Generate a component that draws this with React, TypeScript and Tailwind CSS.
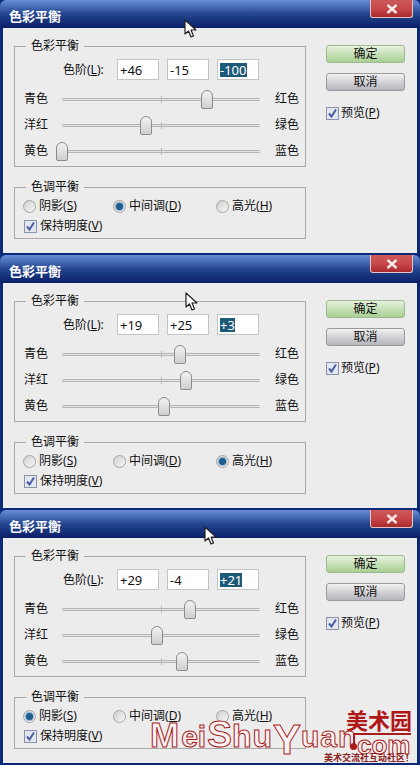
import React from "react";

const font = { fontFamily: '"Noto Sans", "Noto Sans CJK SC", sans-serif' };
const markFont = { fontFamily: '"Liberation Sans", sans-serif' };

type Tone = "shadow" | "mid" | "high";

interface DialogProps {
  values: [number, number, number];
  tone: Tone;
  cursorX: number;
  cursorY: number;
}

const fmt = (v: number) => (v > 0 ? `+${v}` : `${v}`);

const Cursor = ({ x, y }: { x: number; y: number }) => (
  <svg className="absolute z-10" style={{ left: x, top: y }} width="14" height="20" viewBox="0 0 14 20">
    <path d="M1 1 L1 15 L4.5 12 L7 18 L9.5 17 L7 11 L12 11 Z" fill="#fff" stroke="#222" strokeWidth="1.2" strokeLinejoin="round" />
  </svg>
);

const Check = () => (
  <span className="flex h-[13px] w-[13px] shrink-0 items-center justify-center border border-[#8a93ad] bg-[#e4e6ee]">
    <svg width="11" height="11" viewBox="0 0 11 11">
      <path d="M2 5.5 L4.5 8.5 L9 1.5" fill="none" stroke="#4a5fa8" strokeWidth="2" />
    </svg>
  </span>
);

const Radio = ({ on, label, hot, width }: { on: boolean; label: string; hot: string; width: string }) => (
  <div className={`flex items-center gap-[3px] ${width}`}>
    <span className="flex h-[13px] w-[13px] shrink-0 items-center justify-center rounded-full border border-[#a4a4a4] bg-gradient-to-br from-[#cfcfcf] to-[#f8f8f8]">
      {on && <span className="h-[7px] w-[7px] rounded-full bg-[#1f5f8f] ring-1 ring-[#8fb4d0]" />}
    </span>
    <span>
      {label}(<u>{hot}</u>)
    </span>
  </div>
);

const Slider = ({ left, right, value }: { left: string; right: string; value: number }) => (
  <div className="flex h-[26px] items-center">
    <span className="w-[47px] pl-[9px]">{left}</span>
    <div className="relative h-[3px] w-[198px] rounded-sm border-y border-[#b4b4b4] bg-[#e4e4e4]">
      <span className="absolute left-1/2 top-[-3px] h-[7px] w-px bg-[#b8b8b8]" />
      <span
        className="absolute top-[-9px] h-[19px] w-[12px] -translate-x-1/2 rounded-t-[6px] rounded-b-[2px] border border-[#8c8c8c] bg-gradient-to-b from-[#f2f2f2] to-[#cfcfcf]"
        style={{ left: `${(value + 100) / 2}%` }}
      />
    </div>
    <span className="pl-[15px]">{right}</span>
  </div>
);

const Dialog = ({ values, tone, cursorX, cursorY }: DialogProps) => (
  <div className="relative flex h-[255px] w-[420px] flex-col overflow-hidden rounded-t-[6px] bg-[#0c2a78]">
    <div className="flex h-[28px] shrink-0 items-start justify-between bg-gradient-to-b from-[#6a8fd8] via-[#24458f] to-[#0a1f68] pl-[9px] pr-[7px]">
      <span className="mt-[9px] text-[13px] font-bold leading-[15px] text-white">色彩平衡</span>
      <div className="flex h-[18px] w-[43px] items-center justify-center rounded-b-[3px] border border-t-0 border-[#e8c4c4] bg-gradient-to-b from-[#cc5a5a] via-[#c8474a] to-[#a8282c]">
        <svg width="12" height="10" viewBox="0 0 12 10">
          <path d="M1.5 1 L10.5 9 M10.5 1 L1.5 9" fill="none" stroke="#f6e8e8" strokeWidth="2.4" />
        </svg>
      </div>
    </div>
    <div className="mx-[3px] mb-[2px] flex flex-1 gap-[20px] bg-[#ececec] pl-[11px] text-[12px] leading-[14px] text-[#111]">
      <div className="flex w-[292px] flex-col gap-[13px] pt-[11px]">
        <fieldset className="h-[128px] border border-[#a8a8a8] pl-0">
          <legend className="ml-[11px] px-[5px] text-[12px] leading-[14px]">色彩平衡</legend>
          <div className="mt-[6px] flex h-[21px] items-center gap-[8px] pl-[48px]">
            <span className="mr-[1px] w-[45px]">
              色阶(<u>L</u>):
            </span>
            <span className="flex h-[21px] w-[42px] items-center border border-[#c4c4c4] bg-white pl-[2px] text-[13px]">{fmt(values[0])}</span>
            <span className="flex h-[21px] w-[42px] items-center border border-[#c4c4c4] bg-white pl-[2px] text-[13px]">{fmt(values[1])}</span>
            <span className="flex h-[21px] w-[42px] items-center border border-[#c4c4c4] bg-white pl-[2px] text-[13px]">
              <span className="bg-[#1d5a78] text-white">{fmt(values[2])}</span>
            </span>
          </div>
          <div className="mt-[6px]">
            <Slider left="青色" right="红色" value={values[0]} />
            <Slider left="洋红" right="绿色" value={values[1]} />
            <Slider left="黄色" right="蓝色" value={values[2]} />
          </div>
        </fieldset>
        <fieldset className="h-[59px] border border-[#a8a8a8] pl-[8px]">
          <legend className="ml-[3px] px-[5px] text-[12px] leading-[14px]">色调平衡</legend>
          <div className="mt-[2px] flex h-[20px] items-center">
            <Radio on={tone === "shadow"} label="阴影" hot="S" width="w-[90px]" />
            <Radio on={tone === "mid"} label="中间调" hot="D" width="w-[103px]" />
            <Radio on={tone === "high"} label="高光" hot="H" width="w-[70px]" />
          </div>
          <div className="flex h-[20px] items-center gap-[3px] pl-[1px]">
            <Check />
            <span>
              保持明度(<u>V</u>)
            </span>
          </div>
        </fieldset>
      </div>
      <div className="flex w-[79px] flex-col pt-[17px]">
        <div className="flex h-[18px] items-center justify-center rounded-[3px] border border-[#9fb98f] bg-gradient-to-b from-[#e6f2dc] to-[#a9cf94]">确定</div>
        <div className="mt-[10px] flex h-[18px] items-center justify-center rounded-[3px] border border-[#9a9a9a] bg-gradient-to-b from-[#f2f2f2] to-[#b4b4bc]">取消</div>
        <div className="mt-[15px] flex items-center gap-[2px]">
          <Check />
          <span>
            预览(<u>P</u>)
          </span>
        </div>
      </div>
    </div>
    <Cursor x={cursorX} y={cursorY} />
  </div>
);

const outline = "font-bold text-[#f8f2f2] [-webkit-text-stroke:1px_#a81c1c]";

// site watermark lying over the bottom right of the last dialog
const Watermark = () => (
  <div className="absolute left-[150px] top-[705px] h-[60px] w-[264px]">
    <span className="absolute right-[2px] top-[2px] text-[22px] font-bold leading-[26px] text-[#b01818]">美术园</span>
    <div className="absolute left-0 top-[8px] flex h-[40px] items-baseline" style={markFont}>
      <span className={`text-[35px] leading-[40px] ${outline}`}>M</span>
      <span className={`ml-[2px] text-[30px] leading-[40px] ${outline}`}>ei</span>
      <span className={`ml-[1px] text-[37px] leading-[40px] ${outline}`}>S</span>
      <span className={`text-[32px] leading-[40px] tracking-[1px] ${outline}`}>hu</span>
      <span className={`inline-block translate-y-[7px] text-[42px] leading-[40px] ${outline}`}>Y</span>
      <span className={`text-[30px] leading-[40px] tracking-[1px] ${outline}`}>uan</span>
    </div>
    <span className="absolute left-[203px] top-[28px] h-[2px] w-[58px] bg-[#a81c1c]" />
    <span className="absolute left-[203px] top-[28px] h-[12px] w-[2px] bg-[#a81c1c]" />
    <span className="absolute left-[200px] top-[38px] h-[7px] w-[7px] rounded-full bg-[#a81c1c]" />
    <span className={`absolute left-[207px] top-[30px] text-[26px] leading-[20px] ${outline}`} style={markFont}>
      com
    </span>
    <span className="absolute right-0 top-[47px] text-[9px] font-bold leading-[11px] text-[#8a2020]">美术交流社互动社区！</span>
  </div>
);

export default function App() {
  return (
    <div className="relative h-[765px] w-[420px] overflow-hidden bg-[#0c2a78]" style={font}>
      <Dialog values={[46, -15, -100]} tone="mid" cursorX={184} cursorY={19} />
      <Dialog values={[19, 25, 3]} tone="high" cursorX={185} cursorY={37} />
      <Dialog values={[29, -4, 21]} tone="shadow" cursorX={204} cursorY={16} />
      <Watermark />
    </div>
  );
}
